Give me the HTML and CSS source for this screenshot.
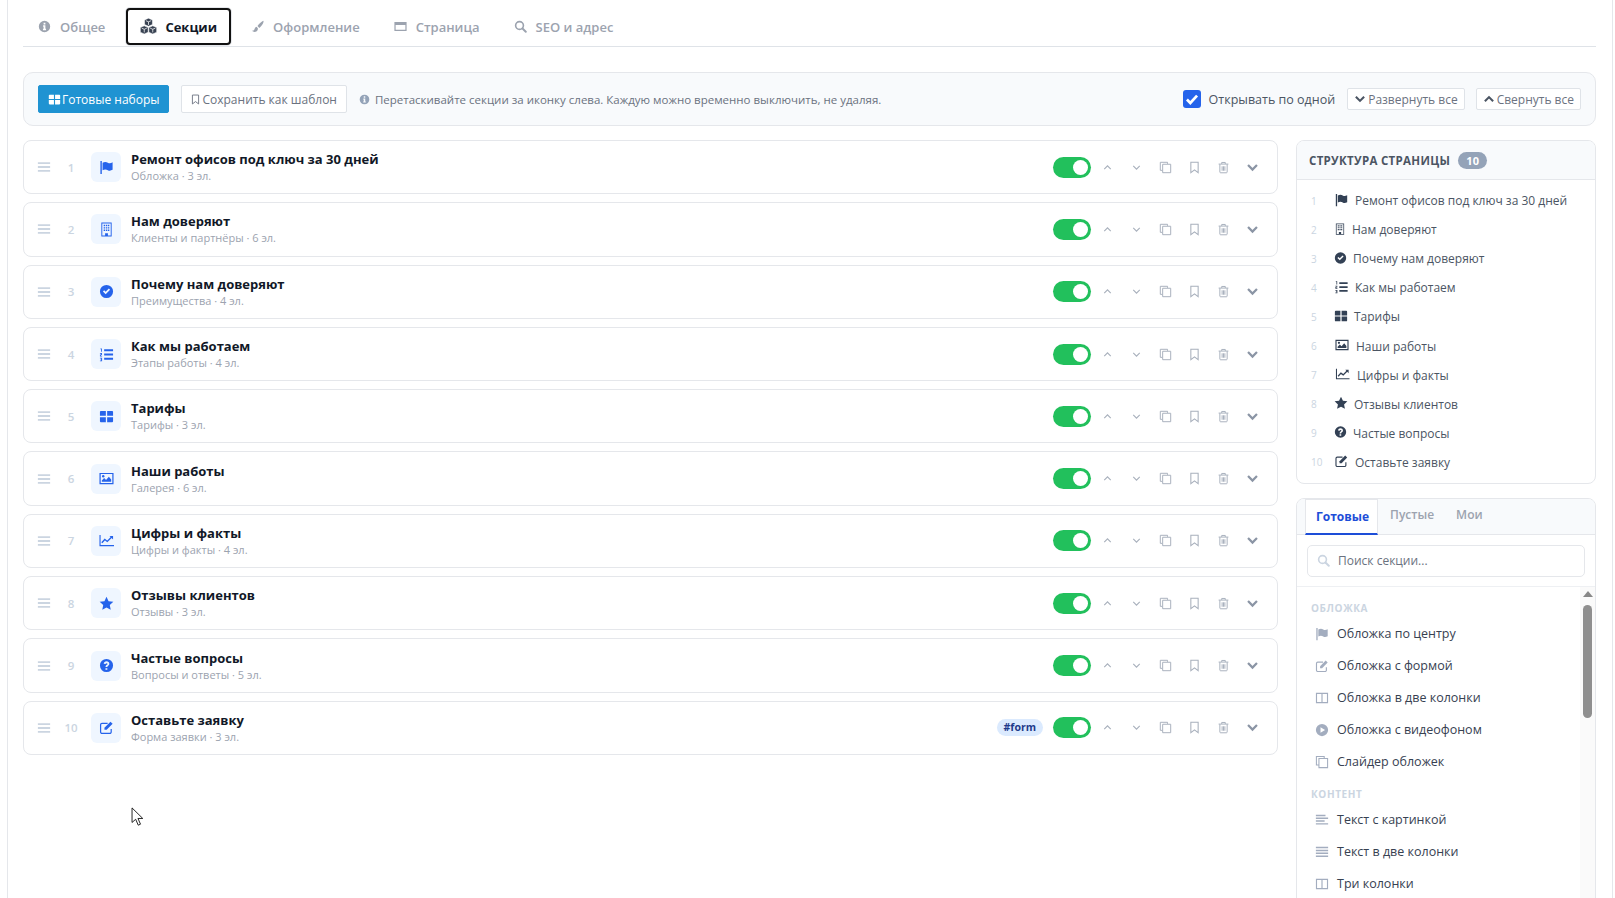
FILE: index.html
```html
<!DOCTYPE html>
<html>
<head>
<meta charset="utf-8" />
<title>Секции</title>
<link rel="stylesheet" href="styles.css">
</head>
<body>
<svg class="sprite" xmlns="http://www.w3.org/2000/svg">
  <symbol id="i-flag" viewBox="0 0 16 16"><path fill="currentColor" d="M1.500 1h1.500v14H1.500z"/><path fill="currentColor" d="M3.800 2.800c2-1 4-1 5.600 0s3.200.7 5.100-.3v8c-1.900 1-3.600 1.200-5.100.3s-3.600-1-5.600 0z"/></symbol>
  <symbol id="i-building" viewBox="0 0 16 16"><path fill="currentColor" fill-rule="evenodd" d="M2.500.5h11v15h-11zM3.500 1.500v13h3v-2.500h3v2.500h3v-13zM5 3h1.500v1.500H5zM7.300 3h1.500v1.500H7.300zM9.500 3H11v1.500H9.500zM5 5.500h1.500V7H5zM7.300 5.500h1.500V7H7.300zM9.500 5.500H11V7H9.500zM5 8h1.500v1.500H5zM7.300 8h1.500v1.500H7.300zM9.500 8H11v1.500H9.500z"/></symbol>
  <symbol id="i-check" viewBox="0 0 16 16"><path fill="currentColor" fill-rule="evenodd" d="M8 1a7 7 0 1 0 0 14A7 7 0 0 0 8 1zM4.200 8l1.300-1.300 1.600 1.600 3.400-3.400 1.300 1.300-4.700 4.700z"/></symbol>
  <symbol id="i-question" viewBox="0 0 16 16"><path fill="currentColor" fill-rule="evenodd" d="M8 1a7 7 0 1 0 0 14A7 7 0 0 0 8 1zM6.900 10.800h2v1.800h-2zM5 6.200C5.200 4.600 6.400 3.500 8 3.500c1.700 0 3 1.100 3 2.700 0 1.200-.7 1.900-1.500 2.400-.5.300-.6.500-.6 1.100H7c0-1.200.4-1.900 1.300-2.400.6-.4.800-.6.800-1 0-.5-.4-.8-1-.8s-1 .3-1.200 1z"/></symbol>
  <symbol id="i-list" viewBox="0 0 16 16"><path fill="currentColor" d="M5.500 2.500H15v2H5.500zM5.500 7H15v2H5.500zM5.500 11.500H15v2H5.500zM1.500 1.500h1.600v3.600H2.200V2.400h-.7zM1 6.500h2.200v2.100H2v.6h1.300v.8H1V7.900h1.300v-.6H1zM1 11.500h2.300v3.600H1v-.8h1.300v-.6H1.600v-.7h.7v-.7H1z"/></symbol>
  <symbol id="i-grid" viewBox="0 0 16 16"><path fill="currentColor" d="M1 3c0-.6.4-1 1-1h5.300v5.300H1zM8.700 2H14c.6 0 1 .4 1 1v4.300H8.700zM1 8.700h6.300V14H2c-.6 0-1-.4-1-1zM8.700 8.700H15V13c0 .6-.4 1-1 1H8.700z"/></symbol>
  <symbol id="i-image" viewBox="0 0 16 16"><path fill="currentColor" fill-rule="evenodd" d="M.5 2h15v12H.5zM1.800 3.300v9.400h12.400V3.300z"/><path fill="currentColor" d="M3 11.500V10l2.500-2.500 2 2 3-3.500 2.500 3v2.500z"/><circle fill="currentColor" cx="4.500" cy="5.500" r="1.300"/></symbol>
  <symbol id="i-chart" viewBox="0 0 16 16"><path fill="currentColor" d="M.5 2h1.200v10.800H16V14H.5z"/><path fill="none" stroke="currentColor" stroke-width="1.500" d="M3 10.500l3.200-3.500 2.600 2 5-5"/><path fill="currentColor" d="M11.200 3.200H15V7z"/></symbol>
  <symbol id="i-star" viewBox="0 0 16 16"><path fill="currentColor" d="M8 .8l2.200 4.700 5.100.6-3.800 3.500 1 5.100L8 12.200l-4.500 2.500 1-5.100L.7 6.100l5.100-.6z"/></symbol>
  <symbol id="i-edit" viewBox="0 0 16 16"><path fill="none" stroke="currentColor" stroke-width="1.300" d="M13 9.500v3.300a1.500 1.500 0 0 1-1.500 1.500H3.200a1.500 1.500 0 0 1-1.500-1.500V5a1.500 1.500 0 0 1 1.500-1.500h6"/><path fill="currentColor" d="M5.800 8.200l6.400-6.400 2.300 2.300-6.400 6.400H5.800z"/></symbol>
  <symbol id="i-cubes" viewBox="0 0 16 16"><path fill="currentColor" stroke="#fff" stroke-width=".5" d="M8 .2l3.700 1.600v4.400L8 7.800 4.300 6.200V1.800zM4 7.400l3.700 1.600v4.400L4 15 .3 13.400V9zM12 7.400L15.700 9v4.400L12 15l-3.700-1.600V9z"/><path fill="none" stroke="#fff" stroke-width=".7" d="M5.500 2.500L8 3.600l2.500-1.100M8 3.600V6.500M1.600 9.600L4 10.600l2.400-1M4 10.600v3M9.600 9.600l2.400 1 2.400-1M12 10.600v3"/></symbol>
  <symbol id="i-brush" viewBox="0 0 16 16"><path fill="currentColor" d="M15 1c-2.200 1-5.500 4-7 6.500l2.200 2.200C12.800 8 15.500 4 15.500 1.500zM6.900 8.400C5 8.800 4.600 10.400 4 12c-.4 1-1.700 1.300-3 1.300 1.800 1.800 5.800 1.900 7-.6.500-1 .6-1.700.4-2.600z"/></symbol>
  <symbol id="i-window" viewBox="0 0 16 16"><path fill="currentColor" fill-rule="evenodd" d="M.5 2.500h15v11H.5zM2 6v6h12V6z"/></symbol>
  <symbol id="i-search" viewBox="0 0 16 16"><circle fill="none" stroke="currentColor" stroke-width="2" cx="6.800" cy="6.800" r="4.800"/><path stroke="currentColor" stroke-width="2.400" stroke-linecap="round" d="M10.500 10.500l4 4"/></symbol>
  <symbol id="i-info" viewBox="0 0 16 16"><path fill="currentColor" fill-rule="evenodd" d="M8 1a7 7 0 1 0 0 14A7 7 0 0 0 8 1zM6.900 3.400h2.200v2H6.900zM6.300 6.600h2.800v4.200h.8v1.700H6.100v-1.700h.8V8.300h-.6z"/></symbol>
  <symbol id="i-bookmark" viewBox="0 0 16 16"><path fill="none" stroke="currentColor" stroke-width="1.300" d="M3.500 1.500h9v13L8 11l-4.500 3.500z"/></symbol>
  <symbol id="i-copy" viewBox="0 0 16 16"><path fill="none" stroke="currentColor" stroke-width="1.200" d="M10.500 3.500V1.600H1.600v9.900h2.300M4.500 4h9.900v10.400H4.500z"/></symbol>
  <symbol id="i-trash" viewBox="0 0 16 16"><path fill="none" stroke="currentColor" stroke-width="1.200" d="M3.500 4v9.500a1 1 0 0 0 1 1h7a1 1 0 0 0 1-1V4M2 3.800h12M5.800 3.600V1.800h4.400v1.800M6.300 6.500v5.500M8 6.500v5.500M9.700 6.500v5.500"/></symbol>
  <symbol id="i-up" viewBox="0 0 16 16"><path fill="none" stroke="currentColor" stroke-width="1.400" d="M4 10l4-4 4 4"/></symbol>
  <symbol id="i-down" viewBox="0 0 16 16"><path fill="none" stroke="currentColor" stroke-width="1.400" d="M4 6l4 4 4-4"/></symbol>
  <symbol id="i-chev-up" viewBox="0 0 16 16"><path fill="none" stroke="currentColor" stroke-width="2.800" d="M2.500 11L8 5.500l5.500 5.500"/></symbol>
  <symbol id="i-chev-down" viewBox="0 0 16 16"><path fill="none" stroke="currentColor" stroke-width="2.800" d="M2.500 5L8 10.500 13.500 5"/></symbol>
  <symbol id="i-bars" viewBox="0 0 16 16"><path fill="currentColor" d="M1 2.500h14v2.200H1zM1 6.900h14v2.200H1zM1 11.300h14v2.200H1z"/></symbol>
  <symbol id="i-columns" viewBox="0 0 16 16"><path fill="none" stroke="currentColor" stroke-width="1.300" d="M1.700 2.700h12.600v10.600H1.700zM8 2.700v10.600"/></symbol>
  <symbol id="i-play" viewBox="0 0 16 16"><path fill="currentColor" fill-rule="evenodd" d="M8 1a7 7 0 1 0 0 14A7 7 0 0 0 8 1zM6.300 4.800L11.500 8l-5.200 3.200z"/></symbol>
  <symbol id="i-align" viewBox="0 0 16 16"><path fill="currentColor" d="M1 2h11v1.600H1zM1 5.200h14v1.600H1zM1 8.400h10v1.600H1zM1 11.600h14v1.600H1z"/></symbol>
  <symbol id="i-justify" viewBox="0 0 16 16"><path fill="currentColor" d="M1 2h14v1.800H1zM1 5.300h14v1.800H1zM1 8.600h14v1.800H1zM1 11.900h14v1.800H1z"/></symbol>
</svg>

<div class="page">

  <div class="tabs">
    <a class="tab"><svg class="ic"><use href="#i-info"/></svg>Общее</a>
    <a class="tab active"><svg class="ic ic-lg"><use href="#i-cubes"/></svg>Секции</a>
    <a class="tab"><svg class="ic"><use href="#i-brush"/></svg>Оформление</a>
    <a class="tab"><svg class="ic"><use href="#i-window"/></svg>Страница</a>
    <a class="tab"><svg class="ic"><use href="#i-search"/></svg>SEO и адрес</a>
  </div>

  <div class="toolbar">
    <a class="btn btn-primary"><svg class="ic"><use href="#i-grid"/></svg>Готовые наборы</a>
    <a class="btn btn-save"><svg class="ic"><use href="#i-bookmark"/></svg>Сохранить как шаблон</a>
    <span class="hint"><svg class="ic"><use href="#i-info"/></svg>Перетаскивайте секции за иконку слева. Каждую можно временно выключить, не удаляя.</span>
    <label class="once"><span class="checkbox"><svg viewBox="0 0 16 16" class="tick"><path fill="none" stroke="#fff" stroke-width="2.400" d="M3.500 8.500l3 3 6-6.500"/></svg></span>Открывать по одной</label>
    <a class="btn btn-small"><svg class="ic"><use href="#i-chev-down"/></svg>Развернуть все</a>
    <a class="btn btn-small"><svg class="ic"><use href="#i-chev-up"/></svg>Свернуть все</a>
  </div>

  <div class="columns">
    <div class="sections">

      <div class="row">
        <svg class="drag"><use href="#i-bars"/></svg><span class="num">1</span>
        <span class="row-icon"><svg><use href="#i-flag"/></svg></span>
        <div class="row-text"><b>Ремонт офисов под ключ за 30 дней</b><small>Обложка · 3 эл.</small></div>
        <span class="toggle"></span>
        <span class="act"><svg><use href="#i-up"/></svg></span><span class="act"><svg><use href="#i-down"/></svg></span><span class="act"><svg><use href="#i-copy"/></svg></span><span class="act"><svg><use href="#i-bookmark"/></svg></span><span class="act"><svg><use href="#i-trash"/></svg></span><span class="act act-open"><svg><use href="#i-chev-down"/></svg></span>
      </div>

      <div class="row">
        <svg class="drag"><use href="#i-bars"/></svg><span class="num">2</span>
        <span class="row-icon"><svg><use href="#i-building"/></svg></span>
        <div class="row-text"><b>Нам доверяют</b><small>Клиенты и партнёры · 6 эл.</small></div>
        <span class="toggle"></span>
        <span class="act"><svg><use href="#i-up"/></svg></span><span class="act"><svg><use href="#i-down"/></svg></span><span class="act"><svg><use href="#i-copy"/></svg></span><span class="act"><svg><use href="#i-bookmark"/></svg></span><span class="act"><svg><use href="#i-trash"/></svg></span><span class="act act-open"><svg><use href="#i-chev-down"/></svg></span>
      </div>

      <div class="row">
        <svg class="drag"><use href="#i-bars"/></svg><span class="num">3</span>
        <span class="row-icon"><svg><use href="#i-check"/></svg></span>
        <div class="row-text"><b>Почему нам доверяют</b><small>Преимущества · 4 эл.</small></div>
        <span class="toggle"></span>
        <span class="act"><svg><use href="#i-up"/></svg></span><span class="act"><svg><use href="#i-down"/></svg></span><span class="act"><svg><use href="#i-copy"/></svg></span><span class="act"><svg><use href="#i-bookmark"/></svg></span><span class="act"><svg><use href="#i-trash"/></svg></span><span class="act act-open"><svg><use href="#i-chev-down"/></svg></span>
      </div>

      <div class="row">
        <svg class="drag"><use href="#i-bars"/></svg><span class="num">4</span>
        <span class="row-icon"><svg><use href="#i-list"/></svg></span>
        <div class="row-text"><b>Как мы работаем</b><small>Этапы работы · 4 эл.</small></div>
        <span class="toggle"></span>
        <span class="act"><svg><use href="#i-up"/></svg></span><span class="act"><svg><use href="#i-down"/></svg></span><span class="act"><svg><use href="#i-copy"/></svg></span><span class="act"><svg><use href="#i-bookmark"/></svg></span><span class="act"><svg><use href="#i-trash"/></svg></span><span class="act act-open"><svg><use href="#i-chev-down"/></svg></span>
      </div>

      <div class="row">
        <svg class="drag"><use href="#i-bars"/></svg><span class="num">5</span>
        <span class="row-icon"><svg><use href="#i-grid"/></svg></span>
        <div class="row-text"><b>Тарифы</b><small>Тарифы · 3 эл.</small></div>
        <span class="toggle"></span>
        <span class="act"><svg><use href="#i-up"/></svg></span><span class="act"><svg><use href="#i-down"/></svg></span><span class="act"><svg><use href="#i-copy"/></svg></span><span class="act"><svg><use href="#i-bookmark"/></svg></span><span class="act"><svg><use href="#i-trash"/></svg></span><span class="act act-open"><svg><use href="#i-chev-down"/></svg></span>
      </div>

      <div class="row">
        <svg class="drag"><use href="#i-bars"/></svg><span class="num">6</span>
        <span class="row-icon"><svg><use href="#i-image"/></svg></span>
        <div class="row-text"><b>Наши работы</b><small>Галерея · 6 эл.</small></div>
        <span class="toggle"></span>
        <span class="act"><svg><use href="#i-up"/></svg></span><span class="act"><svg><use href="#i-down"/></svg></span><span class="act"><svg><use href="#i-copy"/></svg></span><span class="act"><svg><use href="#i-bookmark"/></svg></span><span class="act"><svg><use href="#i-trash"/></svg></span><span class="act act-open"><svg><use href="#i-chev-down"/></svg></span>
      </div>

      <div class="row">
        <svg class="drag"><use href="#i-bars"/></svg><span class="num">7</span>
        <span class="row-icon"><svg><use href="#i-chart"/></svg></span>
        <div class="row-text"><b>Цифры и факты</b><small>Цифры и факты · 4 эл.</small></div>
        <span class="toggle"></span>
        <span class="act"><svg><use href="#i-up"/></svg></span><span class="act"><svg><use href="#i-down"/></svg></span><span class="act"><svg><use href="#i-copy"/></svg></span><span class="act"><svg><use href="#i-bookmark"/></svg></span><span class="act"><svg><use href="#i-trash"/></svg></span><span class="act act-open"><svg><use href="#i-chev-down"/></svg></span>
      </div>

      <div class="row">
        <svg class="drag"><use href="#i-bars"/></svg><span class="num">8</span>
        <span class="row-icon"><svg><use href="#i-star"/></svg></span>
        <div class="row-text"><b>Отзывы клиентов</b><small>Отзывы · 3 эл.</small></div>
        <span class="toggle"></span>
        <span class="act"><svg><use href="#i-up"/></svg></span><span class="act"><svg><use href="#i-down"/></svg></span><span class="act"><svg><use href="#i-copy"/></svg></span><span class="act"><svg><use href="#i-bookmark"/></svg></span><span class="act"><svg><use href="#i-trash"/></svg></span><span class="act act-open"><svg><use href="#i-chev-down"/></svg></span>
      </div>

      <div class="row">
        <svg class="drag"><use href="#i-bars"/></svg><span class="num">9</span>
        <span class="row-icon"><svg><use href="#i-question"/></svg></span>
        <div class="row-text"><b>Частые вопросы</b><small>Вопросы и ответы · 5 эл.</small></div>
        <span class="toggle"></span>
        <span class="act"><svg><use href="#i-up"/></svg></span><span class="act"><svg><use href="#i-down"/></svg></span><span class="act"><svg><use href="#i-copy"/></svg></span><span class="act"><svg><use href="#i-bookmark"/></svg></span><span class="act"><svg><use href="#i-trash"/></svg></span><span class="act act-open"><svg><use href="#i-chev-down"/></svg></span>
      </div>

      <div class="row">
        <svg class="drag"><use href="#i-bars"/></svg><span class="num">10</span>
        <span class="row-icon"><svg><use href="#i-edit"/></svg></span>
        <div class="row-text"><b>Оставьте заявку</b><small>Форма заявки · 3 эл.</small></div>
        <span class="anchor">#form</span>
        <span class="toggle"></span>
        <span class="act"><svg><use href="#i-up"/></svg></span><span class="act"><svg><use href="#i-down"/></svg></span><span class="act"><svg><use href="#i-copy"/></svg></span><span class="act"><svg><use href="#i-bookmark"/></svg></span><span class="act"><svg><use href="#i-trash"/></svg></span><span class="act act-open"><svg><use href="#i-chev-down"/></svg></span>
      </div>

    </div>

    <div class="side">
      <div class="panel">
        <div class="panel-head">Структура страницы <span class="badge">10</span></div>
        <ol class="outline">
          <li><span class="n">1</span><svg width="15" height="14"><use href="#i-flag"/></svg>Ремонт офисов под ключ за 30 дней</li>
          <li><span class="n">2</span><svg width="12" height="14"><use href="#i-building"/></svg>Нам доверяют</li>
          <li><span class="n">3</span><svg width="13" height="14"><use href="#i-check"/></svg>Почему нам доверяют</li>
          <li><span class="n">4</span><svg width="15" height="14"><use href="#i-list"/></svg>Как мы работаем</li>
          <li><span class="n">5</span><svg width="14" height="14"><use href="#i-grid"/></svg>Тарифы</li>
          <li><span class="n">6</span><svg width="16" height="14"><use href="#i-image"/></svg>Наши работы</li>
          <li><span class="n">7</span><svg width="17" height="14"><use href="#i-chart"/></svg>Цифры и факты</li>
          <li><span class="n">8</span><svg width="14" height="14"><use href="#i-star"/></svg>Отзывы клиентов</li>
          <li><span class="n">9</span><svg width="13" height="14"><use href="#i-question"/></svg>Частые вопросы</li>
          <li><span class="n">10</span><svg width="15" height="14"><use href="#i-edit"/></svg>Оставьте заявку</li>
        </ol>
      </div>

      <div class="panel library">
        <div class="lib-tabs">
          <a class="lib-tab active">Готовые</a>
          <a class="lib-tab">Пустые</a>
          <a class="lib-tab">Мои</a>
        </div>
        <div class="lib-search">
          <div class="search-box"><svg class="ic"><use href="#i-search"/></svg>Поиск секции...</div>
        </div>
        <div class="lib-list">
          <div class="lib-label">Обложка</div>
          <div class="lib-item"><svg><use href="#i-flag"/></svg>Обложка по центру</div>
          <div class="lib-item"><svg><use href="#i-edit"/></svg>Обложка с формой</div>
          <div class="lib-item"><svg><use href="#i-columns"/></svg>Обложка в две колонки</div>
          <div class="lib-item"><svg><use href="#i-play"/></svg>Обложка с видеофоном</div>
          <div class="lib-item"><svg><use href="#i-copy"/></svg>Слайдер обложек</div>
          <div class="lib-label">Контент</div>
          <div class="lib-item"><svg><use href="#i-align"/></svg>Текст с картинкой</div>
          <div class="lib-item"><svg><use href="#i-justify"/></svg>Текст в две колонки</div>
          <div class="lib-item"><svg><use href="#i-columns"/></svg>Три колонки</div>
          <div class="scroll"><span class="scroll-up"></span><span class="scroll-thumb"></span></div>
        </div>
      </div>
    </div>
  </div>

</div>

<svg class="cursor" viewBox="0 0 14 22"><path fill="#fff" stroke="#111" stroke-width="1" d="M1 1v16l4-3.500 2.800 6.500 2.500-1.100-2.800-6.300h5.300z"/></svg>
</body>
</html>
```

FILE: styles.css
```css
html, body {
    height:100%;
    overflow:hidden;
}
body {
    margin:0;
    font-family:"Open Sans", "Noto Sans", "Liberation Sans", sans-serif;
    font-size:13px;
    color:#374151;
    background:#fff;
}
.sprite {
    display:none;
}
svg {
    flex:none;
}
.page {
    margin:0 2px 0 7px;
    padding:0 16px 0 15px;
    height:100%;
    border-left:1px solid #e5e7eb;
    border-right:1px solid #e5e7eb;
}
.ic {
    width:13px;
    height:13px;
}

/* top tabs */
.tabs {
    display:flex;
    gap:6px;
    height:38px;
    padding:8px 0 0 1px;
    border-bottom:1px solid #dfe3e8;
}
.tab {
    display:flex;
    align-items:center;
    gap:9px;
    padding:0 14px;
    height:37px;
    font-size:13px;
    font-weight:600;
    color:#9ca3af;
    box-sizing:border-box;
}
.tab .ic-lg {
    width:17px;
    height:17px;
}
.tab.active {
    margin-left:1px;
    color:#111827;
    font-weight:700;
    border:2px solid #111;
    border-radius:4px;
    padding:0 12px;
    box-shadow:0 0 0 1px #e5e7eb;
    background:#fff;
    gap:8px;
}
.tab.active .ic {
    color:#374151;
}

/* toolbar */
.toolbar {
    display:flex;
    align-items:center;
    height:54px;
    margin-top:25px;
    padding:0 14px;
    background:#f8fafc;
    border:1px solid #e5e7eb;
    border-radius:10px;
    box-sizing:border-box;
}
.btn {
    display:flex;
    align-items:center;
    gap:1px;
    height:28px;
    padding:0 9px;
    font-size:12px;
    box-sizing:border-box;
    border:1px solid #dfe3e8;
    background:#fff;
    color:#6b7280;
    border-radius:2px;
}
.btn-primary {
    background:#1f93d2;
    border-color:#1f93d2;
    color:#fff;
    margin-right:12px;
}
.btn-save {
    padding:0 9px 0 8px;
}
.btn-save .ic {
    width:11px;
}
.hint {
    display:flex;
    align-items:center;
    gap:5px;
    margin-left:12px;
    font-size:11.5px;
    color:#6b7280;
}
.hint .ic {
    width:11px;
    height:11px;
    color:#94a3b8;
}
.once {
    display:flex;
    align-items:center;
    gap:8px;
    margin-left:auto;
    margin-right:12px;
    font-size:12.5px;
    color:#4b5563;
}
.checkbox {
    display:block;
    width:18px;
    height:18px;
    border-radius:3px;
    background:#2563eb;
}
.tick {
    display:block;
    width:18px;
    height:18px;
}
.btn-small {
    height:22px;
    padding:0 6px;
    gap:2px;
    margin-left:11px;
}
.once + .btn-small {
    margin-left:0;
}
.btn-small .ic {
    width:12px;
    height:12px;
    color:#4b5563;
}

/* main columns */
.columns {
    display:flex;
    gap:18px;
    margin-top:14px;
}
.sections {
    flex:1;
    display:flex;
    flex-direction:column;
    gap:8px;
}
.row {
    display:flex;
    align-items:center;
    height:54.3px;
    padding:0 10px 0 13px;
    border:1px solid #e5e7eb;
    border-radius:8px;
    box-sizing:border-box;
}
.drag {
    width:14px;
    height:14px;
    color:#cbd5e1;
}
.num {
    width:40px;
    text-align:center;
    font-size:11.5px;
    font-weight:600;
    color:#cbd5e1;
}
.row-icon {
    display:flex;
    align-items:center;
    justify-content:center;
    width:30px;
    height:30px;
    margin-right:10px;
    border-radius:6px;
    background:#eff6ff;
    color:#2563eb;
}
.row-icon svg {
    width:15px;
    height:15px;
}
.row-text {
    flex:1;
}
.row-text b {
    display:block;
    font-size:13px;
    line-height:18px;
    font-weight:700;
    color:#111827;
}
.row-text small {
    display:block;
    font-size:11px;
    line-height:16px;
    color:#9ca3af;
}
.anchor {
    margin-right:10px;
    padding:0 7px;
    border-radius:9px;
    background:#dbeafe;
    color:#1e3a8a;
    font-size:10.5px;
    font-weight:700;
    line-height:17px;
}
.toggle {
    position:relative;
    width:38px;
    height:21px;
    margin-right:2px;
    border-radius:11px;
    background:#22c05c;
}
.toggle:after {
    content:"";
    position:absolute;
    top:3px;
    right:3px;
    width:15px;
    height:15px;
    border-radius:50%;
    background:#fff;
}
.act {
    display:flex;
    justify-content:center;
    width:29px;
    color:#a8b0bc;
}
.act svg {
    width:13px;
    height:13px;
}
.act-open {
    color:#8b95a5;
}

/* sidebar */
.side {
    width:300px;
    flex:none;
    display:flex;
    flex-direction:column;
    gap:14px;
}
.panel {
    border:1px solid #e5e7eb;
    border-radius:8px;
    overflow:hidden;
}
.panel-head {
    display:flex;
    align-items:center;
    gap:8px;
    height:38px;
    padding:0 12px;
    background:#f8fafc;
    border-bottom:1px solid #e5e7eb;
    font-size:11.5px;
    font-weight:700;
    text-transform:uppercase;
    letter-spacing:.3px;
    color:#4b5563;
}
.badge {
    padding:0 8px;
    border-radius:9px;
    background:#94a3b8;
    color:#fff;
    font-size:11px;
    line-height:17px;
}
.outline {
    list-style:none;
    margin:0;
    padding:6px 0 6px;
}
.outline li {
    display:flex;
    align-items:center;
    height:29.1px;
    padding-left:14px;
    font-size:12px;
    color:#4b5563;
}
.outline svg {
    margin-right:6px;
    color:#334155;
    position:relative;
    top:-1px;
}
.n {
    width:23px;
    flex:none;
    font-size:10px;
    color:#cbd5e1;
}
.lib-tabs {
    display:flex;
    height:35px;
    padding-left:8px;
    background:#f8fafc;
    border-bottom:1px solid #e5e7eb;
    font-size:12px;
    font-weight:600;
    color:#9ca3af;
}
.lib-tab {
    padding:0 11px;
    line-height:32px;
}
.lib-tab.active {
    height:36px;
    padding:0 8px 0 10px;
    margin-right:1px;
    line-height:34px;
    box-sizing:border-box;
    background:#fff;
    border:1px solid #e5e7eb;
    border-width:1px 1px 0;
    border-bottom:2px solid #1d4ed8;
    color:#1d4ed8;
    font-weight:700;
}
.lib-search {
    padding:10px 10px 9px;
    border-bottom:1px solid #eef0f3;
}
.search-box {
    display:flex;
    align-items:center;
    gap:8px;
    height:30px;
    padding:0 9px;
    border:1px solid #e5e7eb;
    border-radius:5px;
    font-size:12px;
    color:#6b7280;
}
.search-box .ic {
    color:#cbd5e1;
}
.lib-list {
    position:relative;
    height:400px;
    padding:12px 14px 0;
}
.lib-label {
    font-size:10px;
    line-height:19px;
    font-weight:700;
    text-transform:uppercase;
    letter-spacing:.6px;
    color:#cbd5e1;
}
.lib-item + .lib-label {
    margin-top:7px;
}
.lib-item {
    display:flex;
    align-items:center;
    gap:8px;
    height:32px;
    padding-left:4px;
    font-size:12.5px;
    color:#374151;
}
.lib-item svg {
    width:14px;
    height:14px;
    color:#a3adbf;
}
.scroll {
    position:absolute;
    top:0;
    right:0;
    bottom:0;
    width:15px;
    background:#fafafa;
}
.scroll-up {
    position:absolute;
    top:4px;
    left:3px;
    border:5px solid transparent;
    border-top:0;
    border-bottom:6px solid #888;
}
.scroll-thumb {
    position:absolute;
    top:18px;
    left:3px;
    width:9px;
    height:113px;
    border-radius:5px;
    background:#8f8f8f;
}
.cursor {
    position:absolute;
    left:131px;
    top:807px;
    width:13px;
    height:20px;
}
```
